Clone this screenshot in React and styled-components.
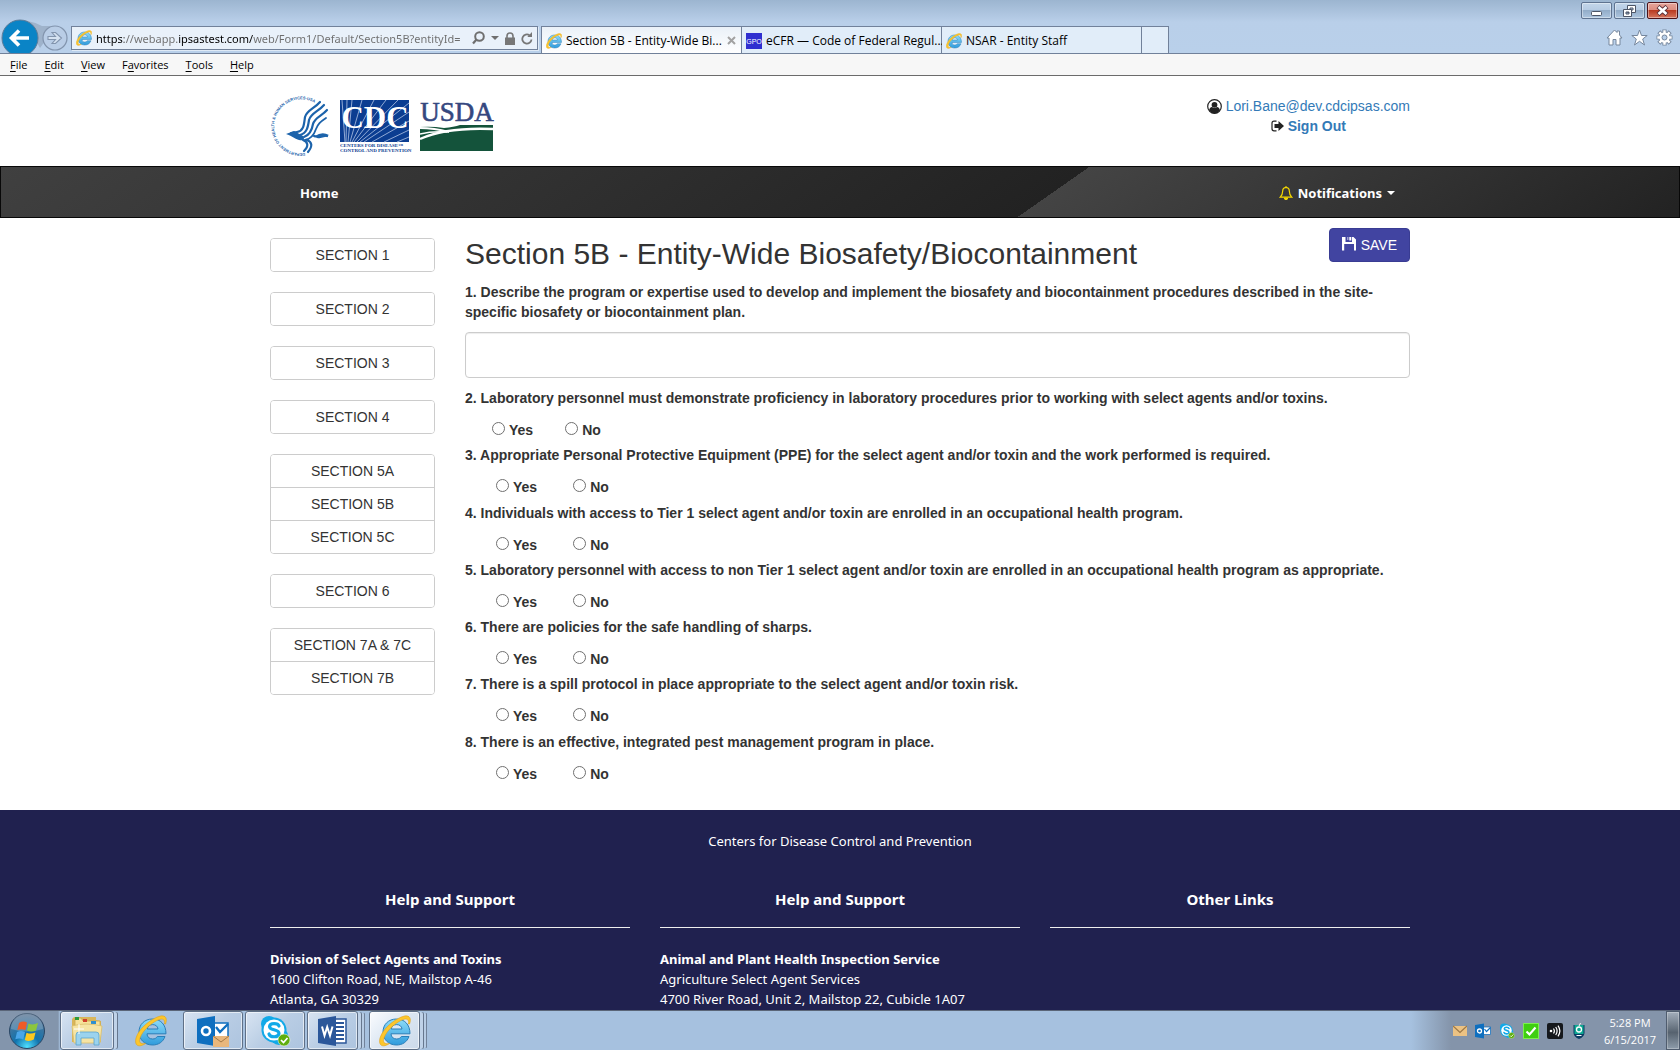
import React from "react";
import styled, { createGlobalStyle, css } from "styled-components";

const ui = `"Open Sans", "Noto Sans", sans-serif`;
const site = `"Noto Sans", "Open Sans", sans-serif`;
const body = `"Liberation Sans", Arial, sans-serif`;

const GlobalStyle = createGlobalStyle`
  *, *::before, *::after { box-sizing: border-box; }
  html, body { margin: 0; padding: 0; overflow: hidden; }
  body { background: #fff; color: #333; font: 14px/20px ${body}; }
  button, input, textarea { font: inherit; color: inherit; margin: 0; }
  svg { display: block; flex: none; }
`;

const Screen = styled.div`
  display: flex;
  flex-direction: column;
  height: 100vh;
`;

/* ---------- browser window ---------- */

const Chrome = styled.header`
  flex: none;
  display: flex;
  flex-direction: column;
  font-family: ${ui};
  font-size: 12px;
  line-height: 16px;
  color: #000;
`;

const Frame = styled.div`
  display: flex;
  align-items: flex-end;
  height: 54px;
  background: linear-gradient(#9cb5d0, #b9cfe9 22px, #b9d0ea);
  border-bottom: 1px solid #71819a;
`;

const NavButtons = styled.div`
  display: flex;
  align-items: flex-end;
  width: 71px;
  height: 34px;
  flex: none;
`;

const AddressBar = styled.form`
  display: flex;
  align-items: center;
  gap: 4px;
  flex: 0 0 467px;
  height: 24px;
  margin: 0 3px 3px 0;
  padding: 0 4px;
  border: 1px solid #71819a;
  background: #e9f1fa;
  box-shadow: 1px 1px 0 #dfeaf6;
`;

const AddressTools = styled.div`
  display: flex;
  align-items: center;
  gap: 6px;
`;

const Url = styled.input`
  flex: 1;
  min-width: 0;
  height: 20px;
  padding: 0;
  border: 0;
  outline: 0;
  background: linear-gradient(
    90deg,
    #000 28px,
    #6d6d6d 28px 82px,
    #000 82px 157px,
    #6d6d6d 157px
  );
  background-clip: text;
  color: #6d6d6d;
  font-family: ${site};
  font-size: 11px;
  -webkit-text-fill-color: transparent;
`;

const IconButton = styled.button`
  display: flex;
  align-items: center;
  justify-content: center;
  padding: 0;
  border: 0;
  background: none;
`;

const Tabs = styled.nav`
  display: flex;
  flex: none;
  height: 27px;
  border: 1px solid #71819a;
  border-bottom: 0;
`;

const Tab = styled.button`
  display: flex;
  align-items: center;
  gap: 4px;
  width: ${(p) => (p.$blank ? 26 : 200)}px;
  padding: 1px 5px 0 4px;
  border: 0;
  border-right: ${(p) => (p.$blank ? 0 : "1px solid #71819a")};
  background: ${(p) => (p.$active ? "linear-gradient(#eaf1f8, #fff)" : "#e1edf9")};
  text-align: left;
  white-space: nowrap;
`;

const TabTitle = styled.span`
  flex: 1;
`;

const WindowSide = styled.div`
  display: flex;
  flex-direction: column;
  align-items: flex-end;
  justify-content: space-between;
  height: 53px;
  margin-left: auto;
  padding: 2px 2px 7px 0;
`;

const WindowButtons = styled.div`
  display: flex;
  gap: 2px;
`;

const WindowButton = styled.button`
  display: flex;
  align-items: center;
  justify-content: center;
  width: 31px;
  height: 17px;
  padding: 0;
  border: 1px solid ${(p) => (p.$close ? "#4c1218" : "#5f7390")};
  border-radius: 2px;
  background: ${(p) =>
    p.$close
      ? "linear-gradient(#e6a59b, #dc8c7f 48%, #b93b22 50%, #d5755d)"
      : "linear-gradient(#c3d6ea, #b6cbe3 48%, #93adc9 50%, #adc5df)"};
  box-shadow: inset 0 0 0 1px #ffffff66;
`;

const Tools = styled.div`
  display: flex;
  gap: 8px;
  padding-right: 5px;
`;

const MenuBar = styled.nav`
  display: flex;
  align-items: center;
  gap: 17px;
  height: 22px;
  padding: 0 10px;
  background: #f7f7f7;
  border-bottom: 1px solid #6b6b6b;
`;

const MenuItem = styled.button`
  padding: 0;
  border: 0;
  background: none;
  font-size: 11px;
  u {
    text-underline-offset: 2px;
  }
`;

/* ---------- web page ---------- */

const Page = styled.div`
  flex: 1;
  min-height: 0;
  overflow: hidden;
`;

const Container = styled.div`
  display: flex;
  max-width: 1140px;
  margin: 0 auto;
`;

const Banner = styled(Container)`
  height: 90px;
  justify-content: space-between;
`;

const Logos = styled.div`
  display: flex;
  align-items: flex-start;
  padding-top: 18px;
  gap: 9px;
`;

const AgencyLogos = styled.div`
  display: flex;
  align-items: flex-end;
  gap: 6px;
`;

const Account = styled.div`
  display: flex;
  flex-direction: column;
  align-items: center;
  padding-top: 20px;
`;

const AccountLine = styled.div`
  display: flex;
  align-items: center;
  gap: 4px;
`;

const Link = styled.a`
  color: #337ab7;
  text-decoration: none;
  font-weight: ${(p) => (p.$bold ? 700 : 400)};
`;

const SiteNav = styled.nav`
  height: 52px;
  border: 1px solid #080808;
  background: linear-gradient(145deg, #404040, #222 62.2%, #444 62.2%, #222);
`;

const NavRow = styled(Container)`
  height: 50px;
  align-items: center;
  justify-content: space-between;
  padding: 1px 15px 0 30px;
`;

const navItem = css`
  display: flex;
  align-items: center;
  gap: 5px;
  padding: 0;
  border: 0;
  background: none;
  color: #fff;
  font: 700 13px/20px ${site};
  text-decoration: none;
`;

const NavLink = styled.a`
  ${navItem}
`;

const NavButton = styled.button`
  ${navItem}
`;

const Columns = styled(Container)`
  gap: 30px;
  padding: 10px 0 21px;
`;

const Sidebar = styled.nav`
  display: flex;
  flex-direction: column;
  gap: 20px;
  flex: 0 0 165px;
  padding-top: 10px;
`;

const ButtonGroup = styled.div`
  display: flex;
  flex-direction: column;
  border: 1px solid #ccc;
  border-radius: 4px;
  overflow: hidden;
`;

const SectionButton = styled.button`
  height: 32px;
  padding: 0;
  border: 0;
  background: #fff;
  text-align: center;
  & + & {
    height: 33px;
    border-top: 1px solid #ccc;
  }
`;

const Form = styled.form`
  flex: 1;
  min-width: 0;
`;

const TitleRow = styled.div`
  display: flex;
  align-items: flex-start;
  justify-content: space-between;
`;

const Title = styled.h2`
  margin: 9px 0 11px;
  font-size: 30px;
  line-height: 34px;
  font-weight: 400;
`;

const SaveButton = styled.button`
  display: flex;
  align-items: center;
  gap: 5px;
  height: 34px;
  padding: 0 12px;
  border: 1px solid #393c93;
  border-radius: 4px;
  background: #4144a1;
  color: #fff;
`;

const TextQuestion = styled.div`
  display: flex;
  flex-direction: column;
  gap: 10px;
  margin-bottom: 10px;
  font-weight: 700;
`;

const Answer = styled.textarea`
  width: 100%;
  height: 46px;
  padding: 6px 12px;
  border: 1px solid #ccc;
  border-radius: 4px;
  box-shadow: inset 0 1px 1px #00000013;
  resize: none;
  font-weight: 400;
`;

const QuestionList = styled.div`
  display: grid;
  grid-auto-rows: 1fr;
  min-height: 401px;
`;

const Question = styled.fieldset`
  margin: 0;
  padding: 0;
  border: 0;
  font-weight: 700;
`;

const Legend = styled.legend`
  padding: 0;
`;

const Choices = styled.div`
  display: flex;
  gap: ${(p) => (p.$narrow ? 32 : 36)}px;
  padding: 12px 0 0 ${(p) => (p.$narrow ? 27 : 31)}px;
`;

const Choice = styled.label`
  display: flex;
  align-items: flex-start;
  gap: 4px;
`;

const Radio = styled.input`
  appearance: none;
  width: 13px;
  height: 13px;
  margin-top: 2px;
  border: 1px solid #707070;
  border-radius: 50%;
  background: #fff;
`;

const Footer = styled.footer`
  padding: 21px 0;
  background: #20214f;
  color: #fff;
  font-family: ${site};
  font-size: 13px;
`;

const Agency = styled.p`
  margin: 0 0 38px;
  text-align: center;
`;

const FooterColumns = styled(Container)`
  gap: 30px;
`;

const FooterColumn = styled.section`
  flex: 1;
`;

const FooterHeading = styled.h4`
  margin: 0 0 21px;
  padding-bottom: 18px;
  border-bottom: 1px solid #eee;
  font-size: 15px;
  line-height: 20px;
  text-align: center;
`;

const Address = styled.address`
  font-style: normal;
`;

/* ---------- taskbar ---------- */

const Taskbar = styled.footer`
  flex: none;
  display: flex;
  align-items: stretch;
  height: 40px;
  border-top: 1px solid #5a6578;
  background: linear-gradient(90deg, #8395ac 58px, #a6c1df 60px);
`;

const StartButton = styled(IconButton)`
  width: 54px;
  margin-right: 6px;
`;

const TaskButton = styled.button`
  display: flex;
  align-items: center;
  justify-content: center;
  width: ${(p) => p.$width}px;
  margin-right: ${(p) => p.$after}px;
  padding: 0;
  border: ${(p) => (p.$plain ? 0 : "1px solid #5f7087")};
  border-radius: 3px;
  background: ${(p) =>
    p.$plain
      ? "none"
      : p.$active
      ? "linear-gradient(135deg, #fafcfe, #dbe6f2 50%, #ccdaea)"
      : "linear-gradient(135deg, #d8e4f2, #b9cde4 50%, #adc4df)"};
  box-shadow: ${(p) =>
    [
      !p.$plain && "inset 0 0 0 1px #ffffff99",
      p.$stack > 0 && "4px 0 0 -1px #bfd2e8, 5px 0 0 -1px #66778e",
      p.$stack > 1 && "8px 0 0 -2px #b7cce4, 9px 0 0 -2px #71829a",
    ]
      .filter(Boolean)
      .join(", ") || "none"};
`;

const Tray = styled.div`
  display: flex;
  align-items: center;
  gap: 8px;
  margin-left: auto;
  padding-left: 42px;
  background: linear-gradient(90deg, #8494aa00, #8494aa 40px);
`;

const Clock = styled.time`
  width: 68px;
  margin-left: 1px;
  color: #fff;
  font: 11px/17px ${ui};
  text-align: center;
`;

const ShowDesktop = styled.button`
  align-self: stretch;
  width: 14px;
  margin-left: -6px;
  border: 1px solid #4f5c6e;
  background: linear-gradient(#a3aebb, #66727f 45%, #56626f 55%, #8e9cab);
  box-shadow: inset 0 0 0 1px #ffffff44;
`;

/* ---------- drawings ---------- */

const IeIcon = ({ size = 16 }) => (
  <svg width={size} height={size} viewBox="0 0 32 32" aria-hidden="true">
    <defs>
      <linearGradient id="ie" x1="0" y1="0" x2="0" y2="1">
        <stop offset="0" stopColor="#8fdcf9" />
        <stop offset="1" stopColor="#2f9bdc" />
      </linearGradient>
    </defs>
    <path
      d="M30 21.500 C28 27 23.500 30 17.500 30 C9.500 30 4 24.500 4 17 C4 9.500 9.500 4 17.500 4 C25.500 4 31 9.500 31 18.800 L12 18.800 C12.200 22 14.300 24 17.600 24 C19.800 24 21.300 23.200 22.300 21.500 Z M12.200 14 L23 14 C22.600 11.200 20.700 9.600 17.600 9.600 C14.600 9.600 12.700 11.200 12.200 14 Z"
      fill="url(#ie)"
      stroke="#2b7fb8"
      strokeWidth="1"
      fillRule="evenodd"
    />
    <path
      d="M30.500 9 C32.500 4 31 0 25.500 1 C17 3 4 13 1 23 C-1 31 4 33 10.500 28.500 C5 29.500 3.500 27 5 23 C8 14.500 18 6.500 25 4.300 C28.500 3.500 30 5 29.500 9 Z"
      fill="#fcc62c"
      stroke="#e0a21a"
      strokeWidth=".6"
    />
  </svg>
);

const GpoIcon = () => (
  <svg width="16" height="16" viewBox="0 0 16 16" aria-hidden="true">
    <rect width="16" height="16" fill="#2f2fd0" />
    <text x="8" y="11" fill="#fff" textAnchor="middle" fontFamily="Liberation Sans, sans-serif" fontSize="7">
      GPO
    </text>
  </svg>
);

const BackForward = () => (
  <svg width="71" height="34" viewBox="0 19 71 34" aria-hidden="true">
    <path d="M24 20 Q34 22 42 26 Q48 26 56 26 L40 48 Z" fill="#9fb3cb" />
    <circle cx="20" cy="38" r="18" fill="#0a84c6" stroke="#5e7c99" strokeWidth="1" />
    <path d="M29 38 H13 M19 30.500 L11.500 38 L19 45.500" fill="none" stroke="#fff" strokeWidth="3.600" />
    <circle cx="55" cy="38" r="12" fill="#b9cde6" stroke="#8294ad" strokeWidth="1.200" />
    <path
      d="M48 36.500 h7.500 l-3.500 -4 h3.500 l6 5.500 l-6 5.500 h-3.500 l3.500 -4 h-7.500 z"
      fill="#d5e2f1"
      stroke="#8294ad"
      strokeWidth="1.100"
    />
  </svg>
);

const SearchIcon = () => (
  <svg width="13" height="14" viewBox="0 0 13 14" aria-hidden="true">
    <circle cx="7.500" cy="5.500" r="4.300" fill="none" stroke="#6f6f6f" strokeWidth="2" />
    <path d="M4.500 8.500 L1 12.500" stroke="#6f6f6f" strokeWidth="2.200" />
  </svg>
);

const CaretIcon = ({ color = "#6f6f6f" }) => (
  <svg width="8" height="4" viewBox="0 0 8 4" aria-hidden="true">
    <path d="M0 0 H8 L4 4 Z" fill={color} />
  </svg>
);

const LockIcon = () => (
  <svg width="10" height="13" viewBox="0 0 10 13" aria-hidden="true">
    <path d="M2 6 V4 a3 3 0 0 1 6 0 V6" fill="none" stroke="#777" strokeWidth="1.600" />
    <rect y="5.500" width="10" height="7.500" fill="#777" />
  </svg>
);

const RefreshIcon = () => (
  <svg width="12" height="13" viewBox="0 0 12 13" aria-hidden="true">
    <path d="M10.500 7.500 A4.600 4.600 0 1 1 8.500 3.200" fill="none" stroke="#777" strokeWidth="1.800" />
    <path d="M6.300 5 H11 V0 Z" fill="#777" />
  </svg>
);

const CloseIcon = () => (
  <svg width="9" height="9" viewBox="0 0 9 9" aria-hidden="true">
    <path d="M1 1 L8 8 M8 1 L1 8" stroke="#a2a2a2" strokeWidth="2" />
  </svg>
);

const outline = { fill: "#fff", stroke: "#76879d", strokeWidth: 1 };

const HomeIcon = () => (
  <svg width="17" height="17" viewBox="0 0 17 17" aria-hidden="true">
    <path d="M8.500 1 L11 3.500 V2 H13.500 V6 L16 9 H14 V16 H10 V10.500 H7 V16 H3 V9 H1 Z" {...outline} />
  </svg>
);

const StarIcon = () => (
  <svg width="17" height="17" viewBox="0 0 17 17" aria-hidden="true">
    <path d="M8.500 1 L10.500 6.500 H16.200 L11.700 10 L13.500 16 L8.500 12.300 L3.500 16 L5.300 10 L0.800 6.500 H6.500 Z" {...outline} />
  </svg>
);

const GearIcon = () => (
  <svg width="17" height="17" viewBox="0 0 17 17" aria-hidden="true">
    <g stroke="#76879d" strokeWidth="4.200">
      <path d="M8.500 .5 V16.500 M.5 8.500 H16.500 M2.800 2.800 L14.200 14.200 M14.200 2.800 L2.800 14.200" />
    </g>
    <circle cx="8.500" cy="8.500" r="6" fill="#76879d" />
    <g stroke="#fff" strokeWidth="2.400">
      <path d="M8.500 1.300 V15.700 M1.300 8.500 H15.700 M3.400 3.400 L13.600 13.600 M13.600 3.400 L3.400 13.600" />
    </g>
    <circle cx="8.500" cy="8.500" r="5.200" fill="#fff" />
    <circle cx="8.500" cy="8.500" r="2.500" fill="#b9d0ea" stroke="#76879d" />
  </svg>
);

const MinimizeIcon = () => (
  <svg width="11" height="12" viewBox="0 0 11 12" aria-hidden="true">
    <rect x=".5" y="6.500" width="10" height="4" rx="1" fill="#fff" stroke="#4d5566" />
  </svg>
);

const RestoreIcon = () => (
  <svg width="13" height="12" viewBox="0 0 13 12" aria-hidden="true">
    <path d="M4.500 .5 H12.500 V7.500 H4.500 Z M7 3 V5 H10 V3 Z" fill="#fff" fillRule="evenodd" stroke="#4d5566" />
    <path d="M.5 4.500 H8.500 V11.500 H.5 Z M3 7 V9 H6 V7 Z" fill="#fff" fillRule="evenodd" stroke="#4d5566" />
  </svg>
);

const CrossIcon = () => (
  <svg width="13" height="11" viewBox="0 0 13 11" aria-hidden="true">
    <path d="M2 1.500 L11 9.500 M11 1.500 L2 9.500" stroke="#5a3038" strokeWidth="4.400" />
    <path d="M2.500 2 L10.500 9 M10.500 2 L2.500 9" stroke="#fff" strokeWidth="2.600" />
  </svg>
);

const HhsLogo = () => (
  <svg width="61" height="64" viewBox="1 1 61 64" role="img" aria-label="Department of Health and Human Services">
    <defs>
      <path id="seal" d="M36 60 A27 27 0 1 1 52 15" />
    </defs>
    <text fill="#1c63ab" fontFamily="Liberation Sans, sans-serif" fontSize="4" fontWeight="700">
      <textPath href="#seal">DEPARTMENT OF HEALTH &amp; HUMAN SERVICES·USA</textPath>
    </text>
    <g fill="none" stroke="#1c63ab" strokeLinecap="round" strokeLinejoin="round">
      <path d="M51 9 C45 16 38 17 36 24 C35 31 35 38 28 39 L22 40" strokeWidth="2.200" />
      <path d="M55 12 C49 19 42 20 40 27 C39 34 38 40 31 42" strokeWidth="2.200" />
      <path d="M58 17 C53 23 46 24 44 31 C43 37 41 42 35 44" strokeWidth="2.200" />
      <path d="M57 25 C51 29 49 31 47 36 C45 42 42 46 36 47" strokeWidth="1.800" />
      <path d="M34 47 C39 49 40 53 35 58 M38 47 C43 49 44 53 39 59 M45 43 C49 45 53 41 58 43" strokeWidth="2.200" />
    </g>
    <path d="M17 41 L25 38 L34 43 C36 46 35 48 30 47 C26 46 25 44 17 41 Z M46 43 Q53 38 60 42 Q54 46 48 45 Z" fill="#1c63ab" />
  </svg>
);

const CdcLogo = () => (
  <svg width="74" height="60" viewBox="0 -6 74 60" role="img" aria-label="Centers for Disease Control and Prevention">
    <rect width="69" height="42" fill="#0b3d91" />
    <g stroke="#9fb6dc" strokeWidth=".9">
      <path d="M5 42 L2 0 M8 42 L12 0 M10 42 L22 0 M12 42 L34 0 M14 42 L46 0 M17 42 L58 0 M20 42 L69 3 M24 42 L69 12 M32 42 L69 21 M44 42 L69 30 M6 42 L7 0 M57 42 L69 37" />
    </g>
    <text x="35" y="28" fill="#fff" textAnchor="middle" fontFamily="Liberation Serif, serif" fontSize="31" fontWeight="700">
      CDC
    </text>
    <g fill="#0b3d91" fontFamily="Liberation Serif, serif" fontSize="5" fontWeight="700">
      <text x="0" y="47">CENTERS FOR DISEASE™</text>
      <text x="0" y="52">CONTROL AND PREVENTION</text>
    </g>
  </svg>
);

const UsdaLogo = () => (
  <svg width="76" height="60" viewBox="0 -6 76 60" role="img" aria-label="United States Department of Agriculture">
    <text x="37" y="21" fill="#35477f" textAnchor="middle" fontFamily="Liberation Serif, serif" fontSize="27" stroke="#35477f" strokeWidth=".6">
      USDA
    </text>
    <rect y="25" width="73" height="26" fill="#14533b" />
    <g fill="none" stroke="#fff">
      <path d="M0 39 Q26 27 73 29" strokeWidth="2.400" />
      <path d="M0 34 Q12 31 27 32" strokeWidth="1.600" />
      <path d="M0 28 Q14 28 29 32" strokeWidth="2" />
      <path d="M0 25 H40 Q34 27 24 28 Q12 26 0 27" fill="#fff" stroke="none" />
    </g>
  </svg>
);

const UserIcon = () => (
  <svg width="15" height="15" viewBox="0 0 15 15" aria-hidden="true">
    <circle cx="7.500" cy="7.500" r="6.800" fill="#fff" stroke="#222" strokeWidth="1.200" />
    <circle cx="7.500" cy="5.800" r="2.900" fill="#222" />
    <path d="M2 11.500 Q2.600 8.200 5 8 Q7.500 9.800 10 8 Q12.400 8.200 13 11.500 Q7.500 17.500 2 11.500 Z" fill="#222" />
  </svg>
);

const SignOutIcon = () => (
  <svg width="13" height="12" viewBox="0 0 13 12" aria-hidden="true">
    <path d="M5.500 1.200 H3 Q1 1.200 1 3.200 V8.800 Q1 10.800 3 10.800 H5.500" fill="none" stroke="#222" strokeWidth="1.200" />
    <path d="M3.500 4 H7.500 V1 L13 6 L7.500 11 V8 H3.500 Z" fill="#222" />
  </svg>
);

const BellIcon = () => (
  <svg width="14" height="14" viewBox="0 0 14 14" aria-hidden="true">
    <path
      d="M7 1.300 C4.600 1.500 3.700 3.200 3.700 5 C3.700 8.600 2.700 9.600 1.200 11.200 H12.800 C11.300 9.600 10.300 8.600 10.300 5 C10.300 3.200 9.400 1.500 7 1.300 Z"
      fill="none"
      stroke="#f5d800"
      strokeWidth="1.200"
    />
    <path d="M7 0 V1.500 M5.300 12 H8.700 A1.700 1.700 0 0 1 5.300 12 Z" stroke="#f5d800" fill="#f5d800" />
  </svg>
);

const FloppyIcon = () => (
  <svg width="14" height="16" viewBox="0 0 14 16" aria-hidden="true">
    <path d="M0 0 H3.500 V5 H10 V0 H11.500 L14 2.500 V13.500 H12 V7 H2.200 V13.500 H0 Z" fill="#fff" />
    <rect x="5" width="1.500" height="3" fill="#fff" opacity=".5" />
    <rect x="7.300" width="2" height="3.500" fill="#fff" />
  </svg>
);

const StartOrb = () => (
  <svg width="38" height="38" viewBox="0 0 38 38" aria-hidden="true">
    <defs>
      <radialGradient id="orb" cx=".5" cy=".95" r=".9">
        <stop offset="0" stopColor="#4fe0ff" />
        <stop offset=".4" stopColor="#1273ad" />
        <stop offset="1" stopColor="#5a7796" />
      </radialGradient>
    </defs>
    <circle cx="19" cy="19" r="17.500" fill="url(#orb)" stroke="#2a4664" />
    <path d="M3 17 A16 16 0 0 1 35 17 Q19 22 3 17 Z" fill="#ffffff33" />
    <path d="M11 11 Q15 8.500 19 10.500 L17.500 18 Q13.500 16.500 9.300 18 Z" fill="#ee5b28" />
    <path d="M20.500 11.500 Q25 13.500 30 11 L28 18.500 Q23.500 20.500 19 18.500 Z" fill="#8cc63c" />
    <path d="M9 20 Q13 18 17 20 L15.300 27.500 Q11.500 25.500 7.300 27.300 Z" fill="#4aa6e8" />
    <path d="M18.500 20.700 Q23 22.500 27.500 20.500 L25.800 27.500 Q21 30 16.800 28 Z" fill="#fdc81f" />
  </svg>
);

const ExplorerIcon = () => (
  <svg width="34" height="32" viewBox="0 0 34 32" aria-hidden="true">
    <path d="M2 4 V27 H31 V6 L26 5 V2 H4 Z" fill="#d9b65b" />
    <path d="M5 3 H11 L13 6 H30 V26 H5 Z" fill="#f7e29a" stroke="#c9a84e" strokeWidth=".8" />
    <rect x="5" y="2" width="4" height="3" fill="#2c9b3c" />
    <rect x="13" y="4" width="4" height="3" fill="#d1402c" />
    <rect x="21" y="6" width="5" height="3" fill="#2d8fd0" />
    <path d="M2 11 Q15 7 32 11 L30 28 H4 Z" fill="#f6e4a4" stroke="#d8be6c" strokeWidth=".8" />
    <path d="M6 30 V20 Q6 17 9 17 H26 Q29 17 29 20 V30 H24 V23 H11 V30 Z" fill="#9bd3ee" stroke="#5aa3cb" strokeWidth=".8" />
    <path d="M9 9 V19 M4 14 H14" stroke="#fff" strokeWidth="1" />
  </svg>
);

const OutlookIcon = ({ width = 32, mail = true }) => (
  <svg width={width} height={width} viewBox="0 0 32 32" aria-hidden="true">
    <rect x="16" y="8" width="15" height="15" fill="#fff" stroke="#0f6fbf" strokeWidth="1.500" />
    <path d="M19 12 L23 17 L31 9" fill="none" stroke="#0f6fbf" strokeWidth="2.400" />
    <path d="M0 4 L18 1 V31 L0 28 Z" fill="#0f6fbf" />
    <circle cx="9" cy="16" r="4" fill="none" stroke="#fff" strokeWidth="2.600" />
    {mail && (
      <g>
        <path d="M16 21 H32 V32 H16 Z" fill="#e9b77c" />
        <path d="M16 21 L24 27 L32 21" fill="none" stroke="#a57a46" />
      </g>
    )}
  </svg>
);

const SkypeIcon = ({ size = 32 }) => (
  <svg width={size} height={size} viewBox="0 0 32 32" aria-hidden="true">
    <circle cx="10" cy="9" r="8" fill="#12a9e8" />
    <circle cx="20" cy="21" r="9" fill="#12a9e8" />
    <circle cx="15" cy="15" r="12.500" fill="#12a9e8" />
    <circle cx="15" cy="15" r="10.500" fill="#fff" />
    <path
      d="M20 11 C19 8 11 7.500 10.500 11.500 C10.500 16 20 13.500 20 18.500 C19.500 23 11 22.500 10 19"
      fill="none"
      stroke="#12a9e8"
      strokeWidth="3.200"
      strokeLinecap="round"
    />
    <circle cx="25" cy="25" r="6" fill="#5fae0e" stroke="#e9f5dc" strokeWidth=".6" />
    <path d="M22 25 L24.500 27.500 L28.500 23" fill="none" stroke="#fff" strokeWidth="1.700" />
  </svg>
);

const WordIcon = () => (
  <svg width="30" height="32" viewBox="0 0 30 32" aria-hidden="true">
    <rect x="14" y="4" width="14" height="24" fill="#fff" stroke="#2b579a" strokeWidth="1.500" />
    <path d="M18 8 H26 M18 12 H26 M18 16 H26 M18 20 H26 M18 24 H26" stroke="#2b579a" strokeWidth="1.800" />
    <path d="M0 4 L18 1 V31 L0 28 Z" fill="#2b579a" />
    <path d="M4 11.500 L6.500 20.500 L9.200 12 L12 20.500 L14.500 11.500" fill="none" stroke="#fff" strokeWidth="2" />
  </svg>
);

const EnvelopeIcon = () => (
  <svg width="14" height="16" viewBox="0 0 14 16" aria-hidden="true">
    <rect y="3" width="14" height="10" fill="#ecc283" />
    <path d="M0 3 L7 9.500 L14 3" fill="none" stroke="#9b7747" strokeWidth="1.200" />
  </svg>
);

const CheckTile = () => (
  <svg width="16" height="16" viewBox="0 0 16 16" aria-hidden="true">
    <rect x=".5" y=".5" width="15" height="15" fill="#3fcf10" stroke="#7df04e" />
    <path d="M3.500 8.500 L6.500 11.500 L12.500 4.500" fill="none" stroke="#fff" strokeWidth="2.200" />
  </svg>
);

const SignalTile = () => (
  <svg width="16" height="16" viewBox="0 0 16 16" aria-hidden="true">
    <rect width="16" height="16" rx="2" fill="#15181c" />
    <circle cx="4" cy="8" r="1.300" fill="#fff" />
    <path d="M6.500 5.500 Q8.300 8 6.500 10.500 M8.700 4 Q11.500 8 8.700 12 M11 2.700 Q14.700 8 11 13.300" fill="none" stroke="#fff" strokeWidth="1.200" />
  </svg>
);

const ShieldIcon = () => (
  <svg width="16" height="16" viewBox="0 0 16 16" aria-hidden="true">
    <path d="M2.500 2 H13.500 V10 Q13 14 8 16 Q3 14 2.500 10 Z" fill="#0b3b63" />
    <rect x="3.500" y="2" width="9" height="9" fill="#0fa893" />
    <circle cx="8" cy="6.500" r="2.500" fill="none" stroke="#fff" strokeWidth="1.300" />
    <path d="M8 3 L9.500 0 M5.500 12.500 H10.500" stroke="#fff" strokeWidth="1" />
  </svg>
);

/* ---------- content ---------- */

const menus = [
  ["", "F", "ile"],
  ["", "E", "dit"],
  ["", "V", "iew"],
  ["F", "a", "vorites"],
  ["", "T", "ools"],
  ["", "H", "elp"],
];

const sections = [
  ["SECTION 1"],
  ["SECTION 2"],
  ["SECTION 3"],
  ["SECTION 4"],
  ["SECTION 5A", "SECTION 5B", "SECTION 5C"],
  ["SECTION 6"],
  ["SECTION 7A & 7C", "SECTION 7B"],
];

const questions = [
  "2. Laboratory personnel must demonstrate proficiency in laboratory procedures prior to working with select agents and/or toxins.",
  "3. Appropriate Personal Protective Equipment (PPE) for the select agent and/or toxin and the work performed is required.",
  "4. Individuals with access to Tier 1 select agent and/or toxin are enrolled in an occupational health program.",
  "5. Laboratory personnel with access to non Tier 1 select agent and/or toxin are enrolled in an occupational health program as appropriate.",
  "6. There are policies for the safe handling of sharps.",
  "7. There is a spill protocol in place appropriate to the select agent and/or toxin risk.",
  "8. There is an effective, integrated pest management program in place.",
];

const offices = [
  {
    heading: "Help and Support",
    name: "Division of Select Agents and Toxins",
    lines: ["1600 Clifton Road, NE, Mailstop A-46", "Atlanta, GA 30329"],
  },
  {
    heading: "Help and Support",
    name: "Animal and Plant Health Inspection Service",
    lines: ["Agriculture Select Agent Services", "4700 River Road, Unit 2, Mailstop 22, Cubicle 1A07"],
  },
  { heading: "Other Links", lines: [] },
];

function BrowserChrome() {
  return (
    <Chrome>
      <Frame>
        <NavButtons>
          <BackForward />
        </NavButtons>
        <AddressBar onSubmit={(e) => e.preventDefault()}>
          <IeIcon />
          <Url
            aria-label="Address"
            defaultValue="https://webapp.ipsastest.com/web/Form1/Default/Section5B?entityId="
          />
          <AddressTools>
            <IconButton type="button" aria-label="Search"><SearchIcon /></IconButton>
            <IconButton type="button" aria-label="Show address history"><CaretIcon /></IconButton>
            <IconButton type="button" aria-label="Security report"><LockIcon /></IconButton>
            <IconButton type="button" aria-label="Refresh"><RefreshIcon /></IconButton>
          </AddressTools>
        </AddressBar>
        <Tabs>
          <Tab $active>
            <IeIcon />
            <TabTitle>Section 5B - Entity-Wide Bi...</TabTitle>
            <CloseIcon />
          </Tab>
          <Tab>
            <GpoIcon />
            <TabTitle>eCFR — Code of Federal Regul...</TabTitle>
          </Tab>
          <Tab>
            <IeIcon />
            <TabTitle>NSAR - Entity Staff</TabTitle>
          </Tab>
          <Tab $blank aria-label="New tab" />
        </Tabs>
        <WindowSide>
          <WindowButtons>
            <WindowButton aria-label="Minimize"><MinimizeIcon /></WindowButton>
            <WindowButton aria-label="Restore"><RestoreIcon /></WindowButton>
            <WindowButton $close aria-label="Close"><CrossIcon /></WindowButton>
          </WindowButtons>
          <Tools>
            <IconButton aria-label="Home"><HomeIcon /></IconButton>
            <IconButton aria-label="Favorites"><StarIcon /></IconButton>
            <IconButton aria-label="Tools"><GearIcon /></IconButton>
          </Tools>
        </WindowSide>
      </Frame>
      <MenuBar>
        {menus.map(([before, key, after]) => (
          <MenuItem key={key + after}>
            {before}
            <u>{key}</u>
            {after}
          </MenuItem>
        ))}
      </MenuBar>
    </Chrome>
  );
}

function YesNoQuestion({ number, text }) {
  return (
    <Question>
      <Legend>{text}</Legend>
      <Choices $narrow={number === 2}>
        {["Yes", "No"].map((option) => (
          <Choice key={option}>
            <Radio type="radio" name={`question-${number}`} value={option} />
            {option}
          </Choice>
        ))}
      </Choices>
    </Question>
  );
}

export default function App() {
  return (
    <Screen>
      <GlobalStyle />
      <BrowserChrome />
      <Page>
        <Banner>
          <Logos>
            <HhsLogo />
            <AgencyLogos>
              <CdcLogo />
              <UsdaLogo />
            </AgencyLogos>
          </Logos>
          <Account>
            <AccountLine>
              <UserIcon />
              <Link href="#account">Lori.Bane@dev.cdcipsas.com</Link>
            </AccountLine>
            <AccountLine>
              <SignOutIcon />
              <Link href="#signout" $bold>Sign Out</Link>
            </AccountLine>
          </Account>
        </Banner>
        <SiteNav>
          <NavRow>
            <NavLink href="#home">Home</NavLink>
            <NavButton>
              <BellIcon />
              Notifications
              <CaretIcon color="#fff" />
            </NavButton>
          </NavRow>
        </SiteNav>
        <Columns>
          <Sidebar>
            {sections.map((group) => (
              <ButtonGroup key={group[0]}>
                {group.map((name) => (
                  <SectionButton key={name}>{name}</SectionButton>
                ))}
              </ButtonGroup>
            ))}
          </Sidebar>
          <Form onSubmit={(e) => e.preventDefault()}>
            <TitleRow>
              <Title>Section 5B - Entity-Wide Biosafety/Biocontainment</Title>
              <SaveButton type="submit">
                <FloppyIcon />
                SAVE
              </SaveButton>
            </TitleRow>
            <TextQuestion>
              <label htmlFor="program">
                1. Describe the program or expertise used to develop and implement the biosafety and
                biocontainment procedures described in the site-specific biosafety or biocontainment plan.
              </label>
              <Answer id="program" />
            </TextQuestion>
            <QuestionList>
              {questions.map((text, i) => (
                <YesNoQuestion key={text} number={i + 2} text={text} />
              ))}
            </QuestionList>
          </Form>
        </Columns>
        <Footer>
          <Agency>Centers for Disease Control and Prevention</Agency>
          <FooterColumns>
            {offices.map((office, i) => (
              <FooterColumn key={i}>
                <FooterHeading>{office.heading}</FooterHeading>
                <Address>
                  <strong>{office.name}</strong>
                  {office.lines.map((line) => (
                    <div key={line}>{line}</div>
                  ))}
                </Address>
              </FooterColumn>
            ))}
          </FooterColumns>
        </Footer>
      </Page>
      <Taskbar>
        <StartButton aria-label="Start"><StartOrb /></StartButton>
        <TaskButton $width={54} $after={4} $stack={1} aria-label="File Explorer"><ExplorerIcon /></TaskButton>
        <TaskButton $width={65} $after={0} $plain aria-label="Internet Explorer"><IeIcon size={32} /></TaskButton>
        <TaskButton $width={60} $after={2} aria-label="Outlook"><OutlookIcon /></TaskButton>
        <TaskButton $width={60} $after={2} aria-label="Skype for Business"><SkypeIcon /></TaskButton>
        <TaskButton $width={51} $after={11} $stack={2} aria-label="Word"><WordIcon /></TaskButton>
        <TaskButton $width={51} $after={11} $stack={2} $active aria-label="Section 5B"><IeIcon size={32} /></TaskButton>
        <Tray>
          <EnvelopeIcon />
          <OutlookIcon width={16} mail={false} />
          <SkypeIcon size={16} />
          <CheckTile />
          <SignalTile />
          <ShieldIcon />
          <Clock>5:28 PM<br />6/15/2017</Clock>
          <ShowDesktop aria-label="Show desktop" />
        </Tray>
      </Taskbar>
    </Screen>
  );
}
